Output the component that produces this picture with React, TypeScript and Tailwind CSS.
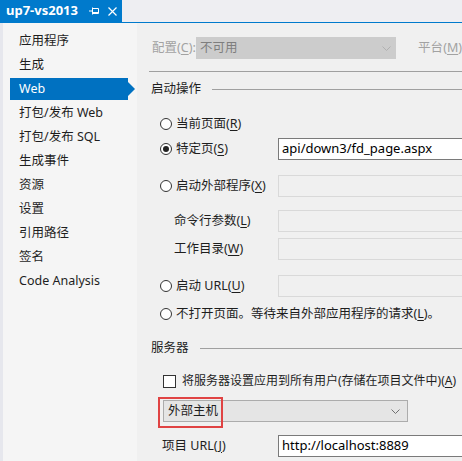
import React from 'react';

const font = { fontFamily: '"Noto Sans", "Noto Sans CJK SC", sans-serif' };

const navItems = [
  '应用程序',
  '生成',
  'Web',
  '打包/发布 Web',
  '打包/发布 SQL',
  '生成事件',
  '资源',
  '设置',
  '引用路径',
  '签名',
  'Code Analysis',
];

function Key({ k }: { k: string }) {
  return (
    <>
      (<span className="underline underline-offset-2">{k}</span>)
    </>
  );
}

function Radio({ checked }: { checked?: boolean }) {
  return (
    <span className="flex h-[12px] w-[12px] shrink-0 items-center justify-center rounded-full border border-[#333] bg-white">
      {checked && <span className="h-[6px] w-[6px] rounded-full bg-[#222]" />}
    </span>
  );
}

function Chevron({ color }: { color: string }) {
  return (
    <svg width="9" height="5" viewBox="0 0 9 5" fill="none">
      <path d="M0.5 0.5 L4.5 4.5 L8.5 0.5" stroke={color} strokeWidth="1" />
    </svg>
  );
}

function Field({ value, enabled }: { value?: string; enabled?: boolean }) {
  return (
    <div
      className={`ml-auto flex h-[22px] w-[184px] shrink-0 items-center border border-r-0 pl-[3px] text-[13px] ${
        enabled ? 'border-[#7a7a7a] bg-white text-black' : 'border-[#d9d9d9] bg-[#f0f0f0]'
      }`}
    >
      {value}
    </div>
  );
}

function GroupHeader({ title }: { title: string }) {
  return (
    <div className="flex h-[18px] items-center gap-[11px] pl-[2px]">
      <span>{title}</span>
      <div className="h-px flex-1 bg-[#a0a0a0]" />
    </div>
  );
}

function TabBar() {
  return (
    <div className="flex h-[22px] bg-[#eeeef2]">
      <div className="flex w-[122px] items-center bg-[#007acc] pl-[6px] text-white">
        <span className="text-[13px] font-bold">up7-vs2013</span>
        <svg className="ml-[11px]" width="10" height="8" viewBox="0 0 10 8" fill="none">
          <path d="M0 4 H3 M3.5 0.5 V7.5 M3.5 1.5 H9.5 V6.5 H3.5 M3.5 5.5 H9.5" stroke="white" strokeWidth="1" />
        </svg>
        <svg className="ml-[9px]" width="9" height="9" viewBox="0 0 9 9" fill="none">
          <path d="M0.5 0.5 L8.5 8.5 M8.5 0.5 L0.5 8.5" stroke="white" strokeWidth="1.2" />
        </svg>
      </div>
    </div>
  );
}

function Sidebar() {
  return (
    <div className="flex w-[137px] shrink-0 flex-col border-l-[3px] border-[#e6e7ed] bg-[#f5f5f5] pt-[6px]">
      {navItems.map((item) => (
        <div key={item} className="flex h-[24px] items-center">
          {item === 'Web' ? (
            <div className="relative ml-[7px] flex h-[22px] w-[118px] items-center bg-[#0071c1] pl-[9px] text-white">
              Web
              <span className="absolute right-[-7px] top-[4px] h-0 w-0 border-y-[7px] border-l-[7px] border-y-transparent border-l-[#0071c1]" />
            </div>
          ) : (
            <span className="pl-[16px]">{item}</span>
          )}
        </div>
      ))}
    </div>
  );
}

export default function App() {
  return (
    <div className="h-[461px] w-[462px] overflow-hidden bg-[#f0f0f0] text-[12.5px] text-[#1e1e1e]" style={font}>
      <TabBar />
      <div className="h-px bg-[#007acc]" />
      <div className="flex h-[438px]">
        <Sidebar />

        <div className="flex min-w-0 flex-1 flex-col overflow-hidden pl-[12px]">
          {/* configuration / platform */}
          <div className="mt-[14px] flex h-[22px] items-center whitespace-nowrap pl-[3px] text-[#a2a2a2]">
            <span className="w-[51px]">
              配置<Key k="C" />:
            </span>
            <div className="flex h-[22px] w-[200px] shrink-0 items-center justify-between bg-[#cccccc] pl-[4px] pr-[5px] text-[#7e7e7e]">
              不可用
              <Chevron color="#b0b0b0" />
            </div>
            <span className="ml-[22px]">
              平台<Key k="M" />
            </span>
          </div>
          <div className="mt-[12px] h-px bg-[#a0a0a0]" />

          <div className="mt-[8px]">
            <GroupHeader title="启动操作" />
          </div>

          <div className="mt-[15px] flex h-[22px] items-center gap-[4px] pl-[11px]">
            <Radio />
            <span>
              当前页面<Key k="R" />
            </span>
          </div>
          <div className="mt-[3px] flex h-[22px] items-center gap-[4px] pl-[11px]">
            <Radio checked />
            <span>
              特定页<Key k="S" />
            </span>
            <Field value="api/down3/fd_page.aspx" enabled />
          </div>
          <div className="mt-[15px] flex h-[22px] items-center gap-[4px] pl-[11px]">
            <Radio />
            <span>
              启动外部程序<Key k="X" />
            </span>
            <Field />
          </div>
          <div className="mt-[13px] flex h-[22px] items-center pl-[25px]">
            <span>
              命令行参数<Key k="L" />
            </span>
            <Field />
          </div>
          <div className="mt-[6px] flex h-[22px] items-center pl-[25px]">
            <span>
              工作目录<Key k="W" />
            </span>
            <Field />
          </div>
          <div className="mt-[15px] flex h-[22px] items-center gap-[4px] pl-[11px]">
            <Radio />
            <span>
              启动 URL<Key k="U" />
            </span>
            <Field />
          </div>
          <div className="mt-[6px] flex h-[22px] items-center gap-[4px] whitespace-nowrap pl-[11px]">
            <Radio />
            <span>
              不打开页面。等待来自外部应用程序的请求<Key k="L" />。
            </span>
          </div>

          <div className="mt-[14px]">
            <GroupHeader title="服务器" />
          </div>

          <div className="mt-[13px] flex h-[22px] items-center gap-[6px] whitespace-nowrap pl-[14px] text-[12px]">
            <span className="h-[13px] w-[13px] shrink-0 border border-[#333] bg-white" />
            <span>
              将服务器设置应用到所有用户(存储在项目文件中)<Key k="A" />
            </span>
          </div>

          <div className="relative ml-[14px] mt-[8px] flex h-[22px] w-[245px] items-center justify-between border border-[#acacac] bg-[#e5e5e5] pl-[4px] pr-[7px]">
            外部主机
            <Chevron color="#707070" />
            <span className="absolute left-[-6px] top-[-4px] h-[31px] w-[65px] border-2 border-[#e04343]" />
          </div>

          <div className="mt-[13px] flex h-[22px] items-center pl-[13px]">
            <span>
              项目 URL<Key k="J" />
            </span>
            <Field value="http://localhost:8889" enabled />
          </div>
        </div>
      </div>
    </div>
  );
}
